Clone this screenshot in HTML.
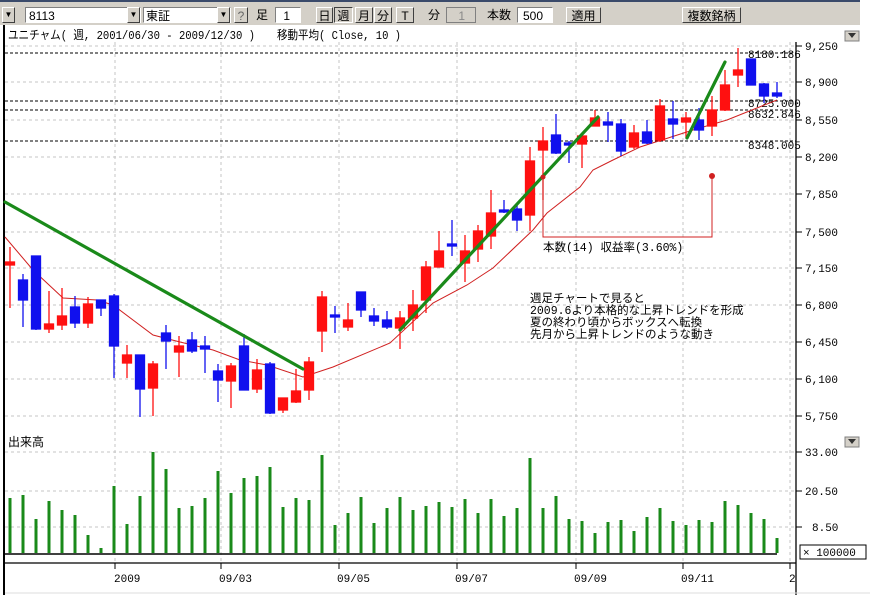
<!DOCTYPE html>
<html><head><meta charset="utf-8"><style>
body{margin:0;width:875px;height:607px;overflow:hidden;background:#fff;font-family:"Liberation Sans","Noto Sans CJK JP",sans-serif}
.tb{position:absolute;left:0;top:0;width:860px;height:25px;background:#d4d0c8;border-top:2px solid #3a4a6a;box-sizing:border-box}
.e{position:absolute;top:5px;height:16px;font-size:12px;line-height:16px;box-sizing:border-box}
.in{background:#fff;border:1px solid #808080;border-right-color:#fff;border-bottom-color:#fff}
.bt{border:1px solid #fff;border-right-color:#404040;border-bottom-color:#404040;background:#d4d0c8;text-align:center}
.dd{position:absolute;top:5px;width:13px;height:16px;background:#d4d0c8;border:1px solid #fff;border-right-color:#404040;border-bottom-color:#404040;box-sizing:border-box;font-size:8px;line-height:14px;text-align:center}
svg text{font-family:"Liberation Mono","Noto Sans CJK JP",monospace}
</style></head><body>
<div class="tb">
<div class="dd" style="left:2px">▼</div>
<div class="e in" style="left:25px;width:116px;padding-left:3px">8113</div>
<div class="dd" style="left:127px">▼</div>
<div class="e in" style="left:143px;width:88px;padding-left:2px;font-family:'Noto Sans CJK JP',sans-serif">東証</div>
<div class="dd" style="left:217px">▼</div>
<div class="e bt" style="left:234px;width:14px;color:#666">?</div>
<div class="e" style="left:256px;font-family:'Noto Sans CJK JP',sans-serif">足</div>
<div class="e in" style="left:275px;width:26px;text-align:right;padding-right:10px">1</div>
<div class="e bt" style="left:316px;width:17px;font-family:'Noto Sans CJK JP',sans-serif">日</div>
<div class="e bt" style="left:334px;width:19px;font-family:'Noto Sans CJK JP',sans-serif;border-color:#404040 #fff #fff #404040">週</div>
<div class="e bt" style="left:355px;width:18px;font-family:'Noto Sans CJK JP',sans-serif">月</div>
<div class="e bt" style="left:374px;width:18px;font-family:'Noto Sans CJK JP',sans-serif">分</div>
<div class="e bt" style="left:396px;width:18px">T</div>
<div class="e" style="left:428px;font-family:'Noto Sans CJK JP',sans-serif">分</div>
<div class="e" style="left:446px;width:30px;background:#d4d0c8;border:1px solid #808080;text-align:right;padding-right:10px;color:#888">1</div>
<div class="e" style="left:487px;font-family:'Noto Sans CJK JP',sans-serif">本数</div>
<div class="e in" style="left:517px;width:36px;text-align:right;padding-right:9px">500</div>
<div class="e bt" style="left:566px;width:35px;font-family:'Noto Sans CJK JP',sans-serif">適用</div>
<div class="e bt" style="left:682px;width:59px;font-family:'Noto Sans CJK JP',sans-serif">複数銘柄</div>
</div>
<svg width="875" height="607" style="position:absolute;left:0;top:0" xmlns="http://www.w3.org/2000/svg">
<rect x="3" y="25" width="2" height="570" fill="#000"/>
<text x="8" y="39" font-size="12" fill="#000" font-family="Noto Sans CJK JP" textLength="247" lengthAdjust="spacingAndGlyphs">ユニチャム( 週, 2001/06/30 - 2009/12/30 )</text>
<text x="277" y="39" font-size="12" fill="#000" font-family="Noto Sans CJK JP" textLength="124" lengthAdjust="spacingAndGlyphs">移動平均( Close, 10 )</text>
<g stroke="#c4c4c4" stroke-dasharray="3,3" stroke-width="1">
<path d="M5 46H796M5 82H796M5 120H796M5 157H796M5 194H796M5 232H796M5 268H796M5 305H796M5 342H796M5 379H796M5 416H796M5 452H796M5 491H796M5 527H796"/>
<path d="M115 42V563M221 42V563M339 42V563M457 42V563M576 42V563M683 42V563M790 42V563"/>
</g>
<g stroke="#000" stroke-dasharray="3,2" stroke-width="1"><path d="M5 53H796M5 101H796M5 110H796M5 141H796"/></g>
<g font-size="11" fill="#000">
<text x="748" y="58">8180.186</text><text x="748" y="107">8725.000</text><text x="748" y="118">8632.846</text><text x="748" y="149">8348.005</text>
</g>
<path d="M796 42V595M5 563H796" stroke="#000" stroke-width="1.3"/>
<g stroke="#000"><path d="M796 46h6M796 82h6M796 120h6M796 157h6M796 194h6M796 232h6M796 268h6M796 305h6M796 342h6M796 379h6M796 416h6M796 452h6M796 491h6M796 527h6M115 563v6M221 563v6M339 563v6M457 563v6M576 563v6M683 563v6M790 563v6"/></g>
<g font-size="11" fill="#000">
<text x="805" y="50">9,250</text><text x="805" y="86">8,900</text><text x="805" y="124">8,550</text><text x="805" y="161">8,200</text><text x="805" y="198">7,850</text><text x="805" y="236">7,500</text><text x="805" y="272">7,150</text><text x="805" y="309">6,800</text><text x="805" y="346">6,450</text><text x="805" y="383">6,100</text><text x="805" y="420">5,750</text>
<text x="805" y="456">33.00</text><text x="805" y="495">20.50</text><text x="812" y="531">8.50</text>
<text x="114" y="582">2009</text><text x="219" y="582">09/03</text><text x="337" y="582">09/05</text><text x="455" y="582">09/07</text><text x="574" y="582">09/09</text><text x="681" y="582">09/11</text><text x="789" y="582">2</text>
</g>
<rect x="800" y="545" width="66" height="14" fill="#fff" stroke="#000"/>
<text x="803" y="556" font-size="11">× 100000</text>
<g fill="#d4d0c8" stroke="#808080"><rect x="845" y="31" width="14" height="10"/><rect x="845" y="437" width="14" height="10"/></g>
<path d="M848 33h8l-4 5zM848 439h8l-4 5z" fill="#333"/>
<text x="8" y="446" font-size="12" font-family="Noto Sans CJK JP">出来高</text>
<path d="M5 593H870" stroke="#ddd"/>
<path d="M5 554H777" stroke="#000" stroke-width="1.5"/>
<polyline fill="none" stroke="#d02020" stroke-width="1" points="5,237 33,270 63,298 97,300 113,305 153,335 180,342 213,350 240,360 267,365 303,377 333,367 390,343 433,303 467,285 493,268 533,230 547,213 580,187 593,170 613,160 640,147 693,130 727,120 777,100"/>
<g stroke-width="1.3">
<g stroke="#ff1010" fill="#ff1010">
<line x1="10" y1="247" x2="10" y2="308"/><rect x="5.5" y="262" width="9" height="3"/>
<line x1="49" y1="291" x2="49" y2="333"/><rect x="44.5" y="324" width="9" height="5"/>
<line x1="62" y1="288" x2="62" y2="330"/><rect x="57.5" y="316" width="9" height="9"/>
<line x1="88" y1="297" x2="88" y2="328"/><rect x="83.5" y="304" width="9" height="19"/>
<line x1="127" y1="345" x2="127" y2="378"/><rect x="122.5" y="355" width="9" height="8"/>
<line x1="153" y1="361" x2="153" y2="416"/><rect x="148.5" y="364" width="9" height="24"/>
<line x1="179" y1="336" x2="179" y2="377"/><rect x="174.5" y="346" width="9" height="6"/>
<line x1="231" y1="363" x2="231" y2="408"/><rect x="226.5" y="366" width="9" height="15"/>
<line x1="257" y1="359" x2="257" y2="393"/><rect x="252.5" y="370" width="9" height="19"/>
<line x1="283" y1="398" x2="283" y2="413"/><rect x="278.5" y="398" width="9" height="12"/>
<line x1="296" y1="369" x2="296" y2="403"/><rect x="291.5" y="391" width="9" height="11"/>
<line x1="309" y1="357" x2="309" y2="400"/><rect x="304.5" y="362" width="9" height="28"/>
<line x1="322" y1="291" x2="322" y2="352"/><rect x="317.5" y="297" width="9" height="34"/>
<line x1="348" y1="303" x2="348" y2="331"/><rect x="343.5" y="320" width="9" height="7"/>
<line x1="400" y1="311" x2="400" y2="349"/><rect x="395.5" y="318" width="9" height="10"/>
<line x1="413" y1="290" x2="413" y2="331"/><rect x="408.5" y="305" width="9" height="13"/>
<line x1="426" y1="261" x2="426" y2="313"/><rect x="421.5" y="267" width="9" height="33"/>
<line x1="439" y1="231" x2="439" y2="267"/><rect x="434.5" y="251" width="9" height="16"/>
<line x1="465" y1="235" x2="465" y2="282"/><rect x="460.5" y="251" width="9" height="12"/>
<line x1="478" y1="225" x2="478" y2="262"/><rect x="473.5" y="231" width="9" height="18"/>
<line x1="491" y1="190" x2="491" y2="249"/><rect x="486.5" y="213" width="9" height="23"/>
<line x1="530" y1="147" x2="530" y2="231"/><rect x="525.5" y="161" width="9" height="54"/>
<line x1="543" y1="127" x2="543" y2="200"/><rect x="538.5" y="141" width="9" height="9"/>
<line x1="582" y1="134" x2="582" y2="168"/><rect x="577.5" y="136" width="9" height="8"/>
<line x1="595" y1="110" x2="595" y2="126"/><rect x="590.5" y="118" width="9" height="8"/>
<line x1="634" y1="125" x2="634" y2="149"/><rect x="629.5" y="133" width="9" height="14"/>
<line x1="660" y1="99" x2="660" y2="142"/><rect x="655.5" y="106" width="9" height="34"/>
<line x1="686" y1="112" x2="686" y2="138"/><rect x="681.5" y="118" width="9" height="4"/>
<line x1="712" y1="96" x2="712" y2="136"/><rect x="707.5" y="110" width="9" height="16"/>
<line x1="725" y1="70" x2="725" y2="111"/><rect x="720.5" y="85" width="9" height="25"/>
<line x1="738" y1="48" x2="738" y2="87"/><rect x="733.5" y="70" width="9" height="5"/>
</g>
<g stroke="#1010ee" fill="#1010ee">
<line x1="23" y1="274" x2="23" y2="327"/><rect x="18.5" y="280" width="9" height="20"/>
<line x1="36" y1="256" x2="36" y2="330"/><rect x="31.5" y="256" width="9" height="73"/>
<line x1="75" y1="296" x2="75" y2="328"/><rect x="70.5" y="307" width="9" height="16"/>
<line x1="101" y1="300" x2="101" y2="316"/><rect x="96.5" y="300" width="9" height="8"/>
<line x1="114" y1="294" x2="114" y2="378"/><rect x="109.5" y="296" width="9" height="50"/>
<line x1="140" y1="355" x2="140" y2="417"/><rect x="135.5" y="355" width="9" height="34"/>
<line x1="166" y1="325" x2="166" y2="369"/><rect x="161.5" y="333" width="9" height="8"/>
<line x1="192" y1="332" x2="192" y2="353"/><rect x="187.5" y="340" width="9" height="11"/>
<line x1="205" y1="336" x2="205" y2="373"/><rect x="200.5" y="346" width="9" height="3"/>
<line x1="218" y1="364" x2="218" y2="402"/><rect x="213.5" y="371" width="9" height="9"/>
<line x1="244" y1="334" x2="244" y2="390"/><rect x="239.5" y="346" width="9" height="44"/>
<line x1="270" y1="362" x2="270" y2="414"/><rect x="265.5" y="364" width="9" height="49"/>
<line x1="335" y1="306" x2="335" y2="333"/><rect x="330.5" y="315" width="9" height="2"/>
<line x1="361" y1="292" x2="361" y2="317"/><rect x="356.5" y="292" width="9" height="18"/>
<line x1="374" y1="308" x2="374" y2="326"/><rect x="369.5" y="316" width="9" height="5"/>
<line x1="387" y1="311" x2="387" y2="329"/><rect x="382.5" y="320" width="9" height="7"/>
<line x1="452" y1="220" x2="452" y2="256"/><rect x="447.5" y="244" width="9" height="2"/>
<line x1="504" y1="200" x2="504" y2="213"/><rect x="499.5" y="210" width="9" height="2"/>
<line x1="517" y1="204" x2="517" y2="231"/><rect x="512.5" y="209" width="9" height="11"/>
<line x1="556" y1="114" x2="556" y2="154"/><rect x="551.5" y="135" width="9" height="18"/>
<line x1="569" y1="141" x2="569" y2="163"/><rect x="564.5" y="143" width="9" height="2"/>
<line x1="608" y1="112" x2="608" y2="142"/><rect x="603.5" y="122" width="9" height="3"/>
<line x1="621" y1="119" x2="621" y2="156"/><rect x="616.5" y="124" width="9" height="27"/>
<line x1="647" y1="120" x2="647" y2="144"/><rect x="642.5" y="132" width="9" height="11"/>
<line x1="673" y1="101" x2="673" y2="139"/><rect x="668.5" y="119" width="9" height="5"/>
<line x1="699" y1="108" x2="699" y2="140"/><rect x="694.5" y="120" width="9" height="10"/>
<line x1="751" y1="59" x2="751" y2="85"/><rect x="746.5" y="59" width="9" height="26"/>
<line x1="764" y1="83" x2="764" y2="103"/><rect x="759.5" y="84" width="9" height="12"/>
<line x1="777" y1="82" x2="777" y2="98"/><rect x="772.5" y="93" width="9" height="3"/>
</g>
</g>
<g stroke="#1a8a1a" stroke-width="3.2" stroke-linecap="round">
<line x1="5" y1="202" x2="303" y2="369"/>
<line x1="400" y1="330" x2="598" y2="117"/>
<line x1="687" y1="138" x2="725" y2="62"/>
</g>
<path d="M543 177V237H712V176" fill="none" stroke="#d02020"/>
<circle cx="543" cy="177" r="2.5" fill="#d02020"/><circle cx="712" cy="176" r="3" fill="#d02020"/>
<g font-size="11.5" font-family="Noto Sans CJK JP" fill="#000">
<text x="543" y="251">本数(14) 収益率(3.60%)</text>
<text x="530" y="302">週足チャートで見ると</text>
<text x="530" y="314">2009.6より本格的な上昇トレンドを形成</text>
<text x="530" y="326">夏の終わり頃からボックスへ転換</text>
<text x="530" y="338">先月から上昇トレンドのような動き</text>
</g>
<path stroke="#1a8a1a" stroke-width="3" d="M10 553V498M23 553V495M36 553V519M49 553V501M62 553V510M75 553V515M88 553V535M101 553V548M114 553V486M127 553V524M140 553V496M153 553V452M166 553V469M179 553V508M192 553V506M205 553V498M218 553V471M231 553V493M244 553V478M257 553V476M270 553V467M283 553V507M296 553V498M309 553V500M322 553V455M335 553V525M348 553V513M361 553V497M374 553V523M387 553V508M400 553V497M413 553V510M426 553V506M439 553V502M452 553V507M465 553V499M478 553V513M491 553V499M504 553V516M517 553V508M530 553V458M543 553V508M556 553V496M569 553V519M582 553V521M595 553V533M608 553V522M621 553V520M634 553V531M647 553V517M660 553V508M673 553V521M686 553V525M699 553V520M712 553V522M725 553V501M738 553V505M751 553V513M764 553V519M777 553V538"/>
</svg>
</body></html>
